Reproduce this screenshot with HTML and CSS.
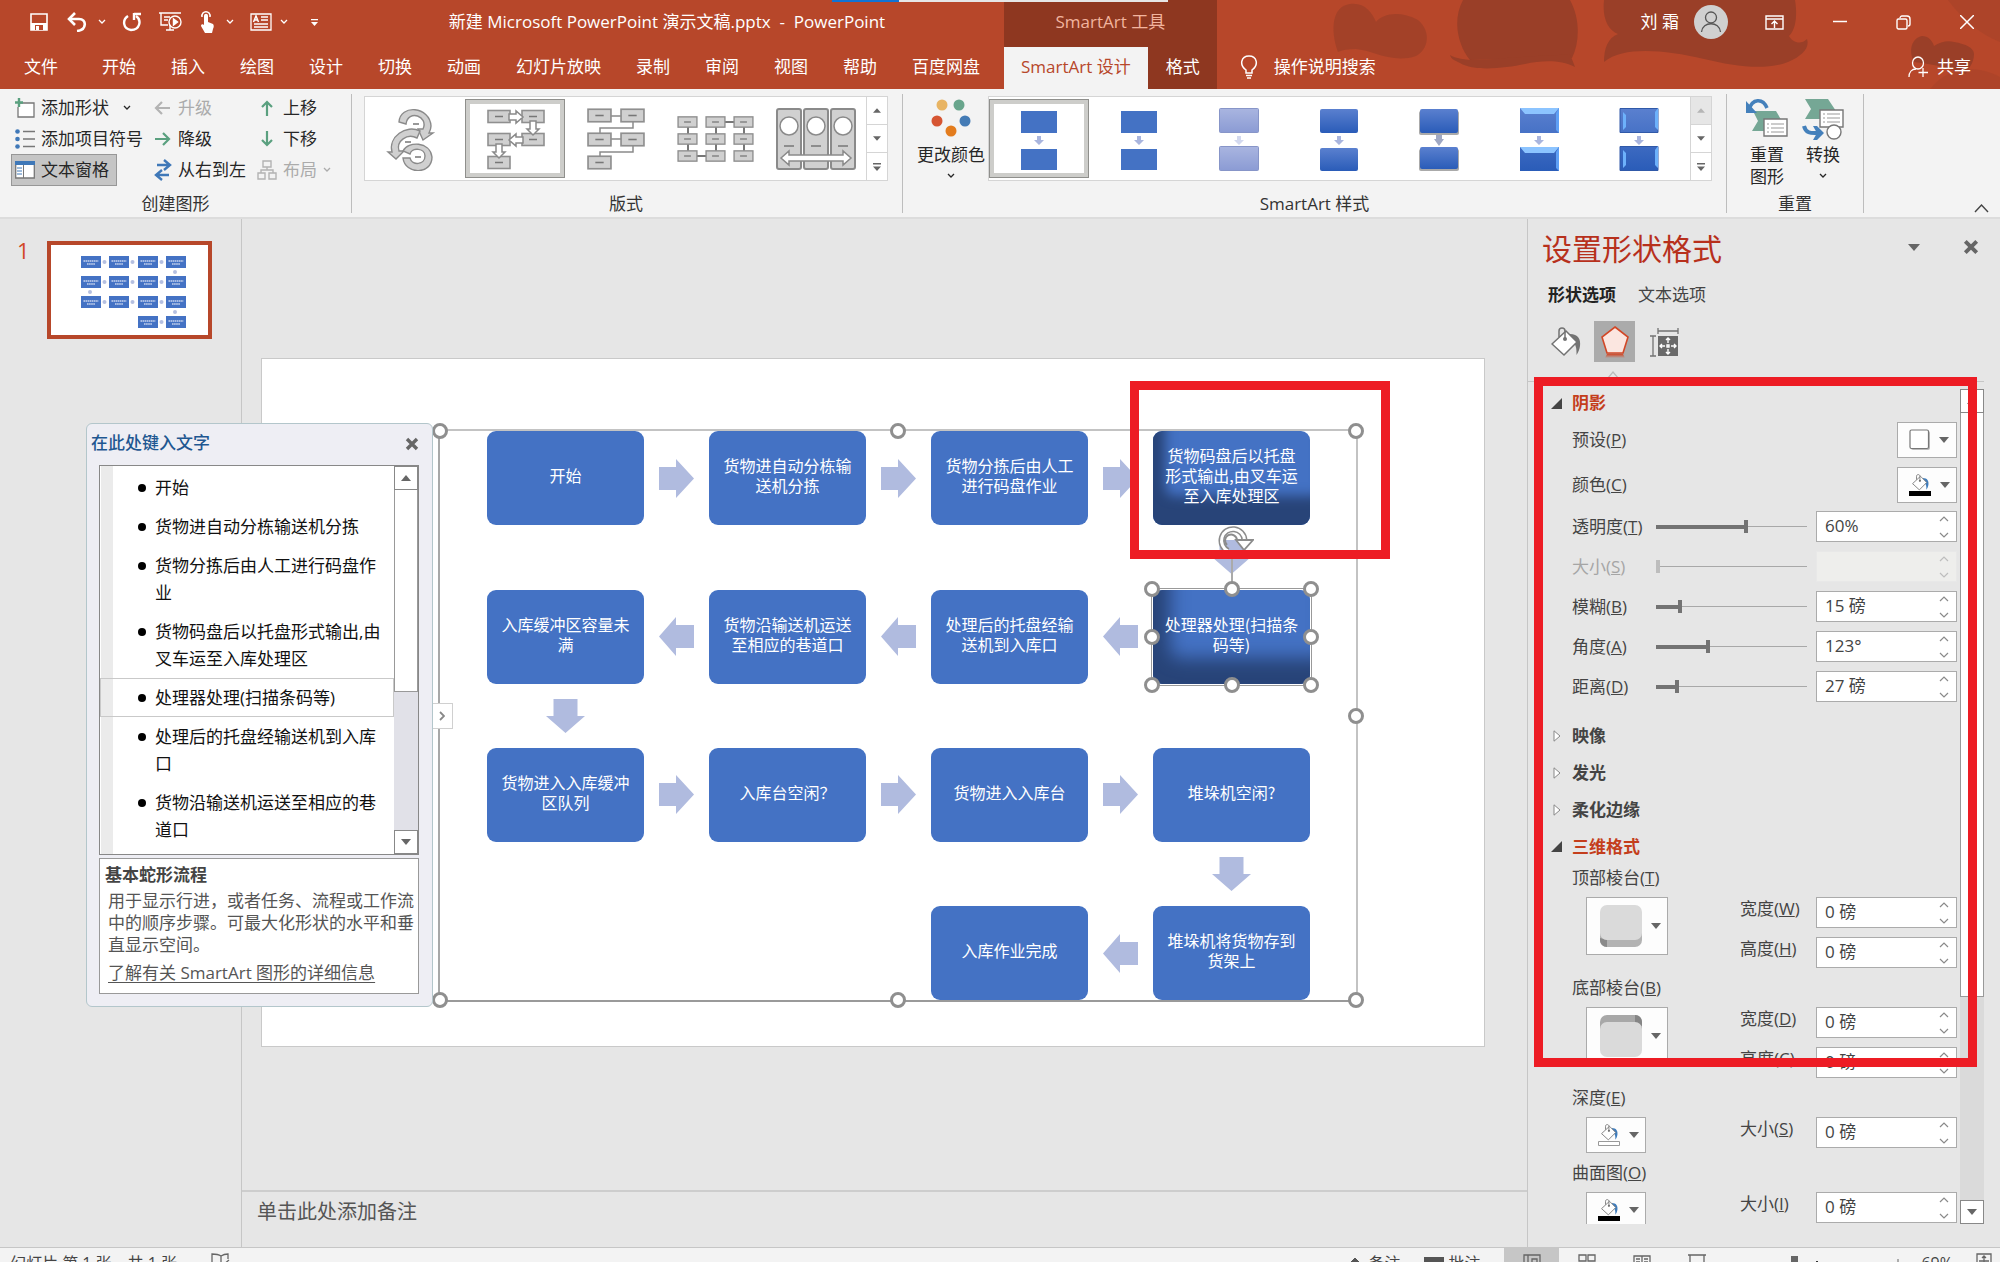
FILE: index.html
```html
<!DOCTYPE html>
<html lang="zh-CN">
<head>
<meta charset="utf-8">
<title>新建 Microsoft PowerPoint 演示文稿.pptx - PowerPoint</title>
<link rel="stylesheet" href="styles.css">
</head>
<body>
<svg class="defs" width="0" height="0" aria-hidden="true">
  <defs>
    <symbol id="chev" viewBox="0 0 8 6"><path d="M1 1l3 3 3-3" fill="none" stroke="currentColor" stroke-width="1.3"/></symbol>
    <symbol id="tri-down" viewBox="0 0 12 7"><path d="M0 0h12l-6 7z" fill="currentColor"/></symbol>
    <symbol id="tri-up" viewBox="0 0 12 7"><path d="M0 7h12l-6-7z" fill="currentColor"/></symbol>
    <symbol id="more" viewBox="0 0 8 8"><path d="M0 0h8v1.4H0zM0 3.5h8L4 8z" fill="currentColor"/></symbol>
    <symbol id="cross" viewBox="0 0 14 14"><path d="M2 2l10 10M12 2L2 12" stroke="currentColor" stroke-width="3.4"/></symbol>
    <symbol id="arr-right" viewBox="0 0 35 39"><path d="M0 8h17V0l18 19.5L17 39v-8H0z" fill="#b0bbdf"/></symbol>
    <symbol id="arr-left" viewBox="0 0 35 39"><path d="M35 8H17V0L0 19.5 17 39v-8h18z" fill="#b0bbdf"/></symbol>
    <symbol id="arr-down" viewBox="0 0 39 34"><path d="M7.5 0v17H0l19.5 17L39 17h-7.5V0z" fill="#b0bbdf"/></symbol>
    <symbol id="bucket" viewBox="0 0 30 30">
      <path d="M19 7c8 0 11 5 10 12-.4 3-1.5 6-3.5 9 0-7 0-12-8-17z" fill="var(--pour, #737373)"/>
      <path d="M1 17L15 4l11 11-13 13z" fill="#fff" stroke="#737373" stroke-width="1.5"/>
      <path d="M8 10V4c0-4 6-4 6 0v7" fill="none" stroke="#737373" stroke-width="1.5"/>
      <circle cx="14" cy="12" r="2" fill="#737373"/>
    </symbol>
    <symbol id="spin" viewBox="0 0 10 22"><path d="M1 5l4-4 4 4M1 17l4 4 4-4" fill="none" stroke="currentColor" stroke-width="1.2"/></symbol>
    <symbol id="gbox" viewBox="0 0 24 14"><rect x="1" y="1" width="22" height="12" fill="#d0d0d0" stroke="#8f8f8f" stroke-width="1.6"/><path d="M8 7h8" stroke="#777" stroke-width="1.5"/></symbol>
    <symbol id="mini" viewBox="0 0 20 12"><rect width="20" height="12" fill="#4472c4"/><path d="M2.5 5h15M6 8h8" stroke="#c9d5ee" stroke-width="1.3" stroke-dasharray="1.6 .5"/></symbol>
    <linearGradient id="g-soft" x2="0" y2="1"><stop stop-color="#a9b5e0"/><stop offset="1" stop-color="#8b9bd4"/></linearGradient>
    <linearGradient id="g-blue" x2="0" y2="1"><stop stop-color="#5a80cf"/><stop offset="1" stop-color="#2a5cb8"/></linearGradient>
    <linearGradient id="g-refl" x2="0" y2="1"><stop stop-color="#d24726"/><stop offset="1" stop-color="#d24726" stop-opacity="0"/></linearGradient>
  </defs>
</svg>

<header class="header">
  <svg class="decor" width="680" height="89" viewBox="0 0 680 89" aria-hidden="true">
    <g fill="#9a3f28">
      <path d="M18 52C10 30 12 6 30 4c14-2 22 8 26 18C62 14 80 10 98 20c14 12 10 30-2 36-24 8-44-6-60-7-8 0-14 1-18 3z" opacity=".7"/>
      <path d="M143 0C132 20 138 46 150 60l102-2c8-16 8-40-2-58z"/>
      <path d="M130 55c8 5 24 6 44 4 30-3 60-3 76-5l5 13c-16-8-34-6-50-3-20 4-50 8-65-1-6-3-9-4-10-8z"/>
      <path d="M284 0c-2 18 4 30 14 34-10 4-14 14-14 28 20-16 60-12 100-3 30 7 60 12 84 3 14-6 22-14 19-23-6 6-14 4-18-3 8-8 8-24 6-36z"/>
      <path d="M594 62c-6-12-2-24 8-26 6 0 10 4 12 10 6-4 14-6 20-4 12 2 20 6 20 12 0 10-6 14-8 20-14-4-30-10-52-12z"/>
      <path d="M628 0c10 14 30 34 52 42V0z" opacity=".35"/>
      <path d="M610 89c20-24 46-24 70-12v12z" opacity=".3"/>
    </g>
  </svg>
  <div class="loading" aria-hidden="true"><i class="loading-done"></i></div>

  <div class="title-left">
    <div class="qat">
      <button class="qbtn w22" aria-label="保存"><svg width="18" height="18" viewBox="0 0 18 18"><path d="M1 1h16v16H1z" fill="none" stroke="#fff" stroke-width="1.6"/><path d="M1 10h16v7H1z" fill="#fff"/><path d="M5 12h8v5H5z" fill="#b7472a"/><path d="M6 13h3v4H6z" fill="#fff"/></svg></button>
      <span class="qsplit g10"><button class="qbtn" aria-label="撤消"><svg width="22" height="20" viewBox="0 0 22 20"><path d="M3 7h10c8 0 8 11-2 12" fill="none" stroke="#fff" stroke-width="2.6"/><path d="M9 1L3 7l6 6" fill="none" stroke="#fff" stroke-width="2.6"/></svg></button><button class="qbtn" aria-label="撤消列表"><svg width="8" height="6"><use href="#chev"/></svg></button></span>
      <button class="qbtn" aria-label="重复"><svg width="20" height="20" viewBox="0 0 20 20"><path d="M6 4C0 8 1 17 9 18c9 0 11-10 5-14" fill="none" stroke="#fff" stroke-width="2.4"/><path d="M12 1v7M12 2h7" fill="none" stroke="#fff" stroke-width="2.4"/></svg></button>
      <button class="qbtn" aria-label="从头开始放映"><svg width="26" height="22" viewBox="0 0 26 22" fill="none" stroke="#fff" stroke-width="1.4"><path d="M1 2h22M3 2v12h7M8 19h8M12 14v5M6 6h6M6 9h4"/><circle cx="17" cy="11" r="6"/><path d="M15.5 8v6l4-3z" fill="#fff"/></svg></button>
      <span class="qsplit g12"><button class="qbtn" aria-label="触摸/鼠标模式"><svg width="14" height="22" viewBox="0 0 14 22"><path d="M4 10V5c0-3 4-3 4 0v6l5 2c1 1 1 3 0 5l-1 4H5l-4-7c0-2 2-2 3-1z" fill="#fff"/><path d="M2 6c-1-7 9-7 8 0" fill="none" stroke="#fff" stroke-width="1.5"/></svg></button><button class="qbtn" aria-label="模式选项"><svg width="8" height="6"><use href="#chev"/></svg></button></span>
      <span class="qsplit g8"><button class="qbtn" aria-label="文本框"><svg width="22" height="18" viewBox="0 0 22 18" fill="none" stroke="#fff" stroke-width="1.3"><path d="M1 1h20v16H1zM11 4h7M11 7h7M4 11h14M4 14h14"/><path d="M3.5 9l2.5-6 2.5 6M4.5 7h3" stroke-width="1.5"/></svg></button><button class="qbtn" aria-label="文本框选项"><svg width="8" height="6"><use href="#chev"/></svg></button></span>
      <button class="qbtn w20" aria-label="自定义快速访问工具栏"><svg width="7" height="7"><use href="#more"/></svg></button>
    </div>
    <h1 class="doc-title">新建 Microsoft PowerPoint 演示文稿.pptx&nbsp; -&nbsp; PowerPoint</h1>
  </div>
  <div class="context-label">SmartArt 工具</div>
  <div class="title-right">
    <span class="user">刘 霜</span>
    <svg class="avatar" width="34" height="34" viewBox="0 0 34 34"><circle cx="17" cy="17" r="17" fill="#d0d0d0"/><circle cx="17" cy="12.5" r="5.5" fill="none" stroke="#555" stroke-width="1.3"/><path d="M7.5 27c1-11 18-11 19 0" fill="none" stroke="#555" stroke-width="1.3"/></svg>
    <button class="wbtn" aria-label="功能区显示选项"><svg width="19" height="15" viewBox="0 0 19 15" fill="none" stroke="#fff" stroke-width="1.4"><path d="M1 1h17v13H1zM1 4h17M9.5 13V6M6.5 9l3-3 3 3"/></svg></button>
    <button class="wbtn" aria-label="最小化"><svg width="14" height="14" viewBox="0 0 14 14"><path d="M0 6.5h14" stroke="#fff" stroke-width="1.5"/></svg></button>
    <button class="wbtn" aria-label="还原"><svg width="15" height="15" viewBox="0 0 15 15" fill="none" stroke="#fff" stroke-width="1.4"><rect x="1" y="4" width="10" height="10" rx="1.5"/><path d="M4 3c0-1 1-2 2-2h5c2 0 3 1 3 3v5c0 1-1 2-2 2"/></svg></button>
    <button class="wbtn" aria-label="关闭"><svg width="14" height="14" viewBox="0 0 14 14"><path d="M0 0l14 14M14 0L0 14" stroke="#fff" stroke-width="1.5"/></svg></button>
  </div>

  <nav class="tabs">
    <a class="tab tab-file" href="#file">文件</a><a class="tab" href="#home">开始</a><a class="tab" href="#insert">插入</a><a class="tab" href="#draw">绘图</a><a class="tab" href="#design">设计</a><a class="tab" href="#transitions">切换</a><a class="tab" href="#animations">动画</a><a class="tab" href="#slideshow">幻灯片放映</a><a class="tab" href="#record">录制</a><a class="tab" href="#review">审阅</a><a class="tab" href="#view">视图</a><a class="tab" href="#help">帮助</a><a class="tab tab-last" href="#netdisk">百度网盘</a>
  </nav>
  <nav class="tabs tabs-context">
    <a class="tab tab-active" href="#smartart-design">SmartArt 设计</a><a class="tab" href="#smartart-format">格式</a>
  </nav>
  <div class="tabs-right">
    <button class="tellme"><svg width="18" height="24" viewBox="0 0 18 24" fill="none" stroke="#fff" stroke-width="1.5"><path d="M6 18v-3C-1 10 1 1 9 1s10 9 3 14v3zM6 20.5h6M7 23h4"/></svg>操作说明搜索</button>
    <button class="share"><svg width="21" height="22" viewBox="0 0 21 22" fill="none" stroke="#fff" stroke-width="1.3"><ellipse cx="10" cy="7" rx="5.5" ry="6"/><path d="M1 21c0-5 3-8 7-8M15 12v9M10.5 16.5h9.5"/></svg>共享</button>
  </div>
</header>

<section class="ribbon" aria-label="SmartArt 设计">
  <div class="group group-create">
    <div class="create-body">
      <div class="cmd-col">
        <button class="cmd"><svg width="20" height="20" viewBox="0 0 20 20"><path d="M4 5h15v14H3V9" fill="#fff" stroke="#777" stroke-width="1.3"/><path d="M4 0v9M0 4.5h8" stroke="#5aa07f" stroke-width="2.4"/></svg>添加形状<svg class="cmd-chev" width="8" height="6"><use href="#chev"/></svg></button>
        <button class="cmd"><svg width="20" height="20" viewBox="0 0 20 20"><g fill="#3f78b8"><circle cx="2.5" cy="2.5" r="2.3"/><circle cx="2.5" cy="10" r="2.3"/><circle cx="2.5" cy="17.5" r="2.3"/></g><path d="M8 2.5h12M8 10h12M8 17.5h12" stroke="#777" stroke-width="1.3"/></svg>添加项目符号</button>
        <button class="cmd cmd-on"><svg width="20" height="20" viewBox="0 0 20 20"><path d="M.7 2h18.6v16H.7z" fill="#fff" stroke="#777" stroke-width="1.3"/><path d="M0 1h20v4H0z" fill="#3f78b8"/><path d="M8.5 5v13" stroke="#777"/><path d="M2 8h5M2 11h5M2 14h5" stroke="#3f78b8"/></svg>文本窗格</button>
      </div>
      <div class="cmd-col">
        <button class="cmd" disabled><svg width="18" height="14" viewBox="0 0 18 14"><path d="M16 7H2M8 1L2 7l6 6" fill="none" stroke="#b3b3b3" stroke-width="2.2"/></svg>升级</button>
        <button class="cmd"><svg width="18" height="14" viewBox="0 0 18 14"><path d="M1 7h14M9 1l6 6-6 6" fill="none" stroke="#5aa07f" stroke-width="2.2"/></svg>降级</button>
        <button class="cmd"><svg width="18" height="22" viewBox="0 0 18 22"><path d="M3 6h12M10 1l6 5-6 5M15 16H3M8 11l-6 5 6 5" fill="none" stroke="#3f78b8" stroke-width="2.4"/></svg>从右到左</button>
      </div>
      <div class="cmd-col">
        <button class="cmd"><svg width="20" height="16" viewBox="0 0 20 16"><path d="M10 16V2M5 7l5-5 5 5" fill="none" stroke="#5aa07f" stroke-width="2.2"/></svg>上移</button>
        <button class="cmd"><svg width="20" height="16" viewBox="0 0 20 16"><path d="M10 0v14M5 9l5 5 5-5" fill="none" stroke="#5aa07f" stroke-width="2.2"/></svg>下移</button>
        <button class="cmd" disabled><svg width="20" height="20" viewBox="0 0 20 20" fill="none" stroke="#b3b3b3" stroke-width="1.4"><path d="M6 1h8v6H6zM1 13h7v6H1zM12 13h7v6h-7zM10 7v3M4 13v-3h12v3"/></svg>布局<svg class="cmd-chev-near" width="8" height="6"><use href="#chev"/></svg></button>
      </div>
    </div>
    <div class="group-label">创建图形</div>
  </div>

  <div class="group group-layouts">
    <div class="gallery">
      <div class="gallery-items">
        <button class="gitem" aria-label="环状蛇形流程"><svg width="84" height="64" viewBox="0 0 84 64"><g fill="#d0d0d0" stroke="#8a8a8a" stroke-width="1.4"><path d="M26 15C27-3 57-1 58 19c0 3-1 5-2 7h4l-10 7-5-11h5c6-13-15-20-17-5z"/><path d="M47 24c-14-7-32 6-28 21h-4l8 7 8-8h-5c-3-10 8-18 18-13z"/><path d="M30 44c5-10 27-10 29 6 0 18-27 18-29 1h7c2 8 15 7 15-2 0-8-13-9-15-2z"/></g><path d="M40 17h6M32 35h6M42 50h6" stroke="#777" stroke-width="1.5"/></svg></button>
        <button class="gitem gitem-on" aria-label="基本蛇形流程"><svg width="84" height="64" viewBox="0 0 84 64"><g><use href="#gbox" x="14" y="2" width="24" height="15"/><use href="#gbox" x="48" y="2" width="24" height="15"/><use href="#gbox" x="14" y="25" width="24" height="15"/><use href="#gbox" x="48" y="25" width="24" height="15"/><use href="#gbox" x="14" y="48" width="24" height="15"/></g><g fill="#fff" stroke="#8a8a8a" stroke-width="1.5"><path d="M36 7h7V4l7 6-7 6v-3h-7zM50 30h-7v-3l-7 6 7 6v-3h7zM57 14v8h-3l6 6 6-6h-3v-8zM23 37v8h-3l6 6 6-6h-3v-8z"/></g></svg></button>
        <button class="gitem" aria-label="重复蛇形流程"><svg width="84" height="64" viewBox="0 0 84 64"><path d="M36 9h16M60 14v7H27v6M36 32h16M60 38v7H27v6" fill="none" stroke="#8a8a8a" stroke-width="1.5"/><use href="#gbox" x="14" y="1" width="25" height="15"/><use href="#gbox" x="47" y="1" width="25" height="15"/><use href="#gbox" x="14" y="25" width="25" height="15"/><use href="#gbox" x="47" y="25" width="25" height="15"/><use href="#gbox" x="14" y="48" width="25" height="15"/></svg></button>
        <button class="gitem" aria-label="垂直蛇形流程"><svg width="84" height="64" viewBox="0 0 84 64"><path d="M15 10v39h28V15h28v34" fill="none" stroke="#777" stroke-width="2"/><use href="#gbox" x="4" y="9" width="21" height="12"/><use href="#gbox" x="4" y="26" width="21" height="12"/><use href="#gbox" x="4" y="43" width="21" height="12"/><use href="#gbox" x="32" y="9" width="21" height="12"/><use href="#gbox" x="32" y="26" width="21" height="12"/><use href="#gbox" x="32" y="43" width="21" height="12"/><use href="#gbox" x="60" y="9" width="21" height="12"/><use href="#gbox" x="60" y="26" width="21" height="12"/><use href="#gbox" x="60" y="43" width="21" height="12"/></svg></button>
        <button class="gitem" aria-label="连续图片列表"><svg width="84" height="64" viewBox="0 0 84 64"><g fill="#d0d0d0" stroke="#8a8a8a" stroke-width="2"><rect x="4" y="2" width="24" height="60" rx="2"/><rect x="31" y="2" width="24" height="60" rx="2"/><rect x="58" y="2" width="24" height="60" rx="2"/></g><g fill="#fff" stroke="#8a8a8a" stroke-width="1.5"><circle cx="16" cy="19" r="9"/><circle cx="43" cy="19" r="9"/><circle cx="70" cy="19" r="9"/><path d="M8 51l8-7v4h54v-4l8 7-8 7v-4H16v4z"/></g><path d="M11 39h10M38 39h10M65 39h10" stroke="#777" stroke-width="1.5"/></svg></button>
      </div>
      <div class="gscroll">
        <button aria-label="上一行"><svg width="8" height="5"><use href="#tri-up"/></svg></button>
        <button aria-label="下一行"><svg width="8" height="5"><use href="#tri-down"/></svg></button>
        <button aria-label="其他"><svg width="8" height="8"><use href="#more"/></svg></button>
      </div>
    </div>
    <div class="group-label">版式</div>
  </div>

  <div class="group group-styles">
    <div class="styles-body">
      <button class="big"><svg class="big-icon" width="40" height="42" viewBox="0 0 40 42"><circle cx="11" cy="7" r="5.5" fill="#e8b463"/><circle cx="28" cy="7" r="5.5" fill="#68a58c"/><circle cx="6" cy="23" r="5.5" fill="#d65532"/><circle cx="34" cy="23" r="5.5" fill="#447bb5"/><circle cx="20" cy="33" r="5.5" fill="#e37c1d"/></svg>更改颜色<svg class="big-chev" width="8" height="6"><use href="#chev"/></svg></button>
      <div class="gallery">
        <div class="gallery-items">
          <button class="gitem gitem-on" aria-label="简单填充"><svg width="84" height="64" viewBox="0 0 84 64"><path d="M24 4h36v22H24zM24 42h36v21H24z" fill="#4472c4"/><path d="M40 29h4v4h3l-5 5-5-5h3z" fill="#a9b5de"/></svg></button>
          <button class="gitem" aria-label="白色轮廓"><svg width="84" height="64" viewBox="0 0 84 64"><path d="M24 4h36v22H24zM24 42h36v21H24z" fill="#4472c4"/><path d="M40 29h4v4h3l-5 5-5-5h3z" fill="#a9b5de"/></svg></button>
          <button class="gitem" aria-label="细微效果"><svg width="84" height="64" viewBox="0 0 84 64"><g fill="url(#g-soft)" stroke="#8795c8"><rect x="22.5" y="1.5" width="39" height="24" rx="1"/><rect x="22.5" y="39.5" width="39" height="24" rx="1"/></g><path d="M40 29h4v4h3l-5 5-5-5h3z" fill="#d3d9ef"/></svg></button>
          <button class="gitem" aria-label="中等效果"><svg width="84" height="64" viewBox="0 0 84 64"><g fill="url(#g-blue)"><rect x="23" y="2" width="38" height="24" rx="2"/><rect x="23" y="41" width="38" height="23" rx="2"/></g><path d="M40 29h4v4h3l-5 5-5-5h3z" fill="#a9b5de"/></svg></button>
          <button class="gitem" aria-label="强烈效果"><svg width="84" height="64" viewBox="0 0 84 64"><g fill="#aaa"><rect x="22" y="4" width="40" height="24" rx="2"/><rect x="22" y="42" width="40" height="22" rx="2"/></g><g fill="url(#g-blue)"><rect x="23" y="2" width="38" height="24" rx="2"/><rect x="23" y="40" width="38" height="22" rx="2"/></g><path d="M39 28h6v4h2l-5 7-5-7h2z" fill="#9fa8c4"/></svg></button>
          <button class="gitem" aria-label="优雅"><svg width="84" height="64" viewBox="0 0 84 64"><g fill="url(#g-blue)"><path d="M23 1h39v25H23zM23 40h39v24H23z"/></g><path d="M23 1h39l-5 6H28zM23 40h39l-5 6H28z" fill="#8cc4ff"/><path d="M62 1v25l-3-3V6zM62 40v24l-3-3V45z" fill="#5fa0f5"/><path d="M40 29h4v4h3l-5 5-5-5h3z" fill="#a9b5de"/></svg></button>
          <button class="gitem" aria-label="嵌入"><svg width="84" height="64" viewBox="0 0 84 64"><g fill="url(#g-blue)" stroke="#3059a8"><path d="M23 1.5h38v24H23zM23 39.5h38v24H23z"/></g><path d="M26 5l3 3v12l-3 3zM61 1v22l-3-3V5zM26 43l3 3v12l-3 3zM61 39v22l-3-3V43z" fill="#6db1fb"/><path d="M40 29h4v4h3l-5 5-5-5h3z" fill="#a9b5de"/></svg></button>
        </div>
        <div class="gscroll">
          <button disabled aria-label="上一行"><svg width="8" height="5"><use href="#tri-up"/></svg></button>
          <button aria-label="下一行"><svg width="8" height="5"><use href="#tri-down"/></svg></button>
          <button aria-label="其他"><svg width="8" height="8"><use href="#more"/></svg></button>
        </div>
      </div>
    </div>
    <div class="group-label">SmartArt 样式</div>
  </div>

  <div class="group group-reset">
    <div class="reset-body">
      <button class="big"><svg class="big-icon" width="42" height="42" viewBox="0 0 42 42"><path d="M7 13h23l7 12-7 8H6l6-10z" fill="#75a795"/><path d="M18 21h23v17H18z" fill="#fff" stroke="#777" stroke-width="1.4"/><path d="M21 26h2M21 30h2M21 34h2M25 26h13M25 30h13M25 34h13" stroke="#999"/><path d="M3 12C6 0 17 0 21 10" fill="none" stroke="#4480bb" stroke-width="3.5"/><path d="M0 3v12h11z" fill="#4480bb"/></svg>重置<br>图形</button>
      <button class="big"><svg class="big-icon" width="42" height="42" viewBox="0 0 42 42"><path d="M3 1h23l8 12-7 8H3l6-10z" fill="#75a795"/><path d="M18 12h23v17H18z" fill="#fff" stroke="#777" stroke-width="1.4"/><path d="M21 16h2M21 20h2M21 24h2M25 16h13M25 20h13M25 24h13" stroke="#999"/><circle cx="32" cy="34" r="7" fill="#fff" stroke="#777" stroke-width="1.4"/><path d="M2 28c2 8 8 7 13 7" fill="none" stroke="#4480bb" stroke-width="4"/><path d="M11 28h4l7 7-7 7h-4l4-7z" fill="#4480bb"/></svg>转换<svg class="big-chev" width="8" height="6"><use href="#chev"/></svg></button>
    </div>
    <div class="group-label">重置</div>
  </div>
  <button class="collapse" aria-label="折叠功能区"><svg width="15" height="9" viewBox="0 0 15 9"><path d="M1 8l6.5-7L14 8" fill="none" stroke="#444" stroke-width="1.4"/></svg></button>
</section>

<main class="work">
  <aside class="thumbs">
    <span class="thumb-no">1</span>
    <button class="thumb" aria-label="幻灯片 1"><svg width="100%" viewBox="0 0 157 90">
      <g fill="#b5c0e1"><circle cx="53.5" cy="17" r="2"/><circle cx="81.5" cy="17" r="2"/><circle cx="110.500" cy="17" r="2"/><circle cx="124" cy="27" r="2"/><circle cx="53.5" cy="37" r="2"/><circle cx="81.5" cy="37" r="2"/><circle cx="110.500" cy="37" r="2"/><circle cx="39" cy="47" r="2"/><circle cx="53.5" cy="57" r="2"/><circle cx="81.5" cy="57" r="2"/><circle cx="110.500" cy="57" r="2"/><circle cx="124" cy="67" r="2"/><circle cx="110.500" cy="77" r="2"/></g>
      <use href="#mini" x="30" y="11" width="20" height="12"/><use href="#mini" x="58" y="11" width="20" height="12"/><use href="#mini" x="87" y="11" width="20" height="12"/><use href="#mini" x="115" y="11" width="20" height="12"/>
      <use href="#mini" x="30" y="31" width="20" height="12"/><use href="#mini" x="58" y="31" width="20" height="12"/><use href="#mini" x="87" y="31" width="20" height="12"/><use href="#mini" x="115" y="31" width="20" height="12"/>
      <use href="#mini" x="30" y="51" width="20" height="12"/><use href="#mini" x="58" y="51" width="20" height="12"/><use href="#mini" x="87" y="51" width="20" height="12"/><use href="#mini" x="115" y="51" width="20" height="12"/>
      <use href="#mini" x="87" y="71" width="20" height="12"/><use href="#mini" x="115" y="71" width="20" height="12"/>
    </svg></button>
  </aside>

  <section class="stage">
    <div class="canvas">
      <div class="slide">
        <div class="smartart">
          <div class="flow">
            <div class="node">开始</div><svg class="arrow" width="35" height="39"><use href="#arr-right"/></svg>
            <div class="node">货物进自动分栋输送机分拣</div><svg class="arrow" width="35" height="39"><use href="#arr-right"/></svg>
            <div class="node">货物分拣后由人工进行码盘作业</div><svg class="arrow" width="35" height="39"><use href="#arr-right"/></svg>
            <div class="node node-shade">货物码盘后以托盘形式输出,由叉车运至入库处理区</div>
            <svg class="arrow col-7" width="39" height="34"><use href="#arr-down"/></svg>
            <div class="node">入库缓冲区容量未满</div><svg class="arrow" width="35" height="39"><use href="#arr-left"/></svg>
            <div class="node">货物沿输送机运送至相应的巷道口</div><svg class="arrow" width="35" height="39"><use href="#arr-left"/></svg>
            <div class="node">处理后的托盘经输送机到入库口</div><svg class="arrow" width="35" height="39"><use href="#arr-left"/></svg>
            <div class="node node-shade-wide">处理器处理(扫描条码等)
              <div class="picked">
                <i class="stem"></i>
                <svg class="rotate" width="36" height="30" viewBox="0 0 36 30"><path d="M10 25A11.5 11.5 0 1 1 26.5 14" fill="none" stroke="#8c8c8c" stroke-width="6"/><path d="M10 25A11.5 11.5 0 1 1 26.5 14" fill="none" stroke="#fff" stroke-width="3"/><path d="M18 14h17l-9 10z" fill="#fff" stroke="#8c8c8c" stroke-width="1.8"/><path d="M9 19a6 6 0 1 1 10-5" fill="none" stroke="#8c8c8c" stroke-width="2"/></svg>
                <i class="knob tl"></i><i class="knob tc"></i><i class="knob tr"></i><i class="knob ml"></i><i class="knob mr"></i><i class="knob bl"></i><i class="knob bc"></i><i class="knob br"></i>
              </div>
            </div>
            <svg class="arrow col-1" width="39" height="34"><use href="#arr-down"/></svg>
            <div class="node col-1">货物进入入库缓冲区队列</div><svg class="arrow" width="35" height="39"><use href="#arr-right"/></svg>
            <div class="node">入库台空闲？</div><svg class="arrow" width="35" height="39"><use href="#arr-right"/></svg>
            <div class="node">货物进入入库台</div><svg class="arrow" width="35" height="39"><use href="#arr-right"/></svg>
            <div class="node">堆垛机空闲?</div>
            <svg class="arrow col-7" width="39" height="34"><use href="#arr-down"/></svg>
            <div class="node col-5">入库作业完成</div><svg class="arrow" width="35" height="39"><use href="#arr-left"/></svg>
            <div class="node">堆垛机将货物存到货架上</div>
          </div>
          <i class="knob tl"></i><i class="knob tc"></i><i class="knob tr"></i><i class="knob mr"></i><i class="knob bl"></i><i class="knob bc"></i><i class="knob br"></i>
          <button class="expander" aria-label="文本窗格"><svg width="6" height="10" viewBox="0 0 6 10"><path d="M1 1l4 4-4 4" fill="none" stroke="#888" stroke-width="1.8"/></svg></button>
        </div>
        <div class="mark mark-node"></div>
      </div>
    </div>
    <div class="notes">单击此处添加备注</div>
  </section>

  <aside class="format">
    <div class="format-head">
      <h2>设置形状格式</h2>
      <button aria-label="任务窗格选项"><svg width="12" height="7"><use href="#tri-down"/></svg></button>
      <button aria-label="关闭窗格"><svg width="16" height="16"><use href="#cross"/></svg></button>
    </div>
    <div class="format-tabs"><a class="on" href="#shape-options">形状选项</a><a href="#text-options">文本选项</a></div>
    <div class="format-icons">
      <button aria-label="填充与线条"><svg width="30" height="30"><use href="#bucket"/></svg></button>
      <button class="on" aria-label="效果"><svg width="30" height="34" viewBox="0 0 30 34"><path d="M15 2l13 10-5 16H7L2 12z" fill="#fbe6e0" stroke="#d24726" stroke-width="1.6"/><path d="M5 33l2-4h16l2 4z" fill="url(#g-refl)"/></svg></button>
      <button aria-label="大小与属性"><svg width="30" height="30" viewBox="0 0 30 30"><path d="M9 1v6M29 1v6M9 4h20M1 9h6M1 29h6M4 9v20" fill="none" stroke="#737373" stroke-width="1.3"/><path d="M9 9h20v20H9z" fill="#6a6a6a"/><path d="M19 11v5M19 22v5M11 19h5M22 19h5M17 13l2-2 2 2M17 25l2 2 2-2M13 17l-2 2 2 2M25 17l2 2-2 2M18 18h2v2h-2z" fill="none" stroke="#fff" stroke-width="1.4"/></svg></button>
    </div>
    <svg class="caret" width="12" height="7" viewBox="0 0 12 7"><path d="M1 7l5-6 5 6" fill="none" stroke="#bbb" stroke-width="1.2"/></svg>
    <div class="format-scroll">
      <div class="format-body">
        <h3 class="sec sec-open"><svg width="11" height="11" viewBox="0 0 11 11"><path d="M11 0v11H0z" fill="#444"/></svg>阴影</h3>
        <div class="row row-tall"><span class="lbl">预设(<u>P</u>)</span><button class="drop" aria-label="预设"><svg width="22" height="22" viewBox="0 0 22 22"><rect x="2" y="2" width="19" height="19" rx="2" fill="#bbb"/><rect x="1" y="1" width="18.5" height="18.5" rx="1.5" fill="#fff" stroke="#777" stroke-width="1.2"/></svg><svg width="10" height="6"><use href="#tri-down"/></svg></button></div>
        <div class="row row-tall"><span class="lbl">颜色(<u>C</u>)</span><button class="drop pour-blue" aria-label="颜色"><svg width="24" height="24" viewBox="0 0 24 24"><use href="#bucket" x="4" y="1" width="17" height="17"/><path d="M1 18h22v5H1z"/></svg><svg width="10" height="6"><use href="#tri-down"/></svg></button></div>
        <div class="row"><label class="lbl" for="tr">透明度(<u>T</u>)</label><input class="range" aria-label="透明度滑块" type="range" value="60" style="--v:60%"><span class="num"><input id="tr" value="60%"><svg width="10" height="22"><use href="#spin"/></svg></span></div>
        <div class="row row-off"><label class="lbl" for="sz">大小(<u>S</u>)</label><input class="range" aria-label="大小滑块" type="range" value="0" style="--v:0%" disabled><span class="num"><input id="sz" value="" disabled><svg width="10" height="22"><use href="#spin"/></svg></span></div>
        <div class="row"><label class="lbl" for="bl">模糊(<u>B</u>)</label><input class="range" aria-label="模糊滑块" type="range" value="15" style="--v:15%"><span class="num"><input id="bl" value="15 磅"><svg width="10" height="22"><use href="#spin"/></svg></span></div>
        <div class="row"><label class="lbl" for="an">角度(<u>A</u>)</label><input class="range" aria-label="角度滑块" type="range" value="34" style="--v:34%"><span class="num"><input id="an" value="123°"><svg width="10" height="22"><use href="#spin"/></svg></span></div>
        <div class="row"><label class="lbl" for="di">距离(<u>D</u>)</label><input class="range" aria-label="距离滑块" type="range" value="13" style="--v:13%"><span class="num"><input id="di" value="27 磅"><svg width="10" height="22"><use href="#spin"/></svg></span></div>
        <div class="secs">
          <h3 class="sec"><svg width="11" height="12" viewBox="0 0 11 12"><path d="M3 .8L9 6l-6 5.2z" fill="#fff" stroke="#888"/></svg>映像</h3>
          <h3 class="sec"><svg width="11" height="12" viewBox="0 0 11 12"><path d="M3 .8L9 6l-6 5.2z" fill="#fff" stroke="#888"/></svg>发光</h3>
          <h3 class="sec"><svg width="11" height="12" viewBox="0 0 11 12"><path d="M3 .8L9 6l-6 5.2z" fill="#fff" stroke="#888"/></svg>柔化边缘</h3>
          <h3 class="sec sec-open"><svg width="11" height="11" viewBox="0 0 11 11"><path d="M11 0v11H0z" fill="#444"/></svg>三维格式</h3>
        </div>
        <div class="sub">顶部棱台(<u>T</u>)</div>
        <div class="pair">
          <button class="drop drop-big" aria-label="顶部棱台"><svg width="44" height="44" viewBox="0 0 44 44"><rect x="1" y="8" width="42" height="35" rx="7" fill="#b3b3b3"/><path d="M1 34v2c0 4 3 7 7 7V36z" fill="#8a8a8a"/><rect x="1" y="1" width="42" height="35" rx="7" fill="#dadada"/></svg><svg width="10" height="6"><use href="#tri-down"/></svg></button>
          <div class="fields"><label for="tw">宽度(<u>W</u>)</label><span class="num"><input id="tw" value="0 磅"><svg width="10" height="22"><use href="#spin"/></svg></span><label for="th">高度(<u>H</u>)</label><span class="num"><input id="th" value="0 磅"><svg width="10" height="22"><use href="#spin"/></svg></span></div>
        </div>
        <div class="sub">底部棱台(<u>B</u>)</div>
        <div class="pair">
          <button class="drop drop-big" aria-label="底部棱台"><svg width="44" height="44" viewBox="0 0 44 44"><rect x="1" y="1" width="42" height="35" rx="7" fill="#a8a8a8"/><path d="M43 12V8c0-4-3-7-7-7v8z" fill="#858585"/><rect x="1" y="8" width="42" height="35" rx="7" fill="#dadada"/></svg><svg width="10" height="6"><use href="#tri-down"/></svg></button>
          <div class="fields"><label for="bw">宽度(<u>D</u>)</label><span class="num"><input id="bw" value="0 磅"><svg width="10" height="22"><use href="#spin"/></svg></span><label for="bh">高度(<u>C</u>)</label><span class="num"><input id="bh" value="0 磅"><svg width="10" height="22"><use href="#spin"/></svg></span></div>
        </div>
        <div class="sub">深度(<u>E</u>)</div>
        <div class="pair">
          <button class="drop pour-blue" aria-label="深度颜色"><svg width="24" height="24" viewBox="0 0 24 24"><use href="#bucket" x="4" y="1" width="17" height="17"/><path d="M1.5 18.5h21v4h-21z" fill="#fff" stroke="#999"/></svg><svg width="10" height="6"><use href="#tri-down"/></svg></button>
          <div class="fields"><label for="ds">大小(<u>S</u>)</label><span class="num"><input id="ds" value="0 磅"><svg width="10" height="22"><use href="#spin"/></svg></span></div>
        </div>
        <div class="sub">曲面图(<u>O</u>)</div>
        <div class="pair">
          <button class="drop pour-blue" aria-label="曲面图颜色"><svg width="24" height="24" viewBox="0 0 24 24"><use href="#bucket" x="4" y="1" width="17" height="17"/><path d="M1 18h22v5H1z"/></svg><svg width="10" height="6"><use href="#tri-down"/></svg></button>
          <div class="fields"><label for="cs">大小(<u>I</u>)</label><span class="num"><input id="cs" value="0 磅"><svg width="10" height="22"><use href="#spin"/></svg></span></div>
        </div>
      </div>
      <div class="sbar sbar-format"><button aria-label="向上滚动"><svg width="10" height="6"><use href="#tri-up"/></svg></button><i class="sthumb"></i><button class="sdown" aria-label="向下滚动"><svg width="10" height="6"><use href="#tri-down"/></svg></button></div>
    </div>
    <div class="mark mark-format"></div>
  </aside>

  <section class="textpane" aria-label="文本窗格">
    <div class="textpane-head"><h2>在此处键入文字</h2><button aria-label="关闭"><svg width="14" height="14"><use href="#cross"/></svg></button></div>
    <div class="outline">
      <ul>
        <li>开始</li>
        <li>货物进自动分栋输送机分拣</li>
        <li>货物分拣后由人工进行码盘作业</li>
        <li>货物码盘后以托盘形式输出,由叉车运至入库处理区</li>
        <li class="on">处理器处理(扫描条码等)</li>
        <li>处理后的托盘经输送机到入库口</li>
        <li>货物沿输送机运送至相应的巷道口</li>
      </ul>
      <div class="sbar sbar-text"><button aria-label="向上滚动"><svg width="10" height="6"><use href="#tri-up"/></svg></button><i class="sthumb"></i><button class="sdown" aria-label="向下滚动"><svg width="10" height="6"><use href="#tri-down"/></svg></button></div>
    </div>
    <div class="about">
      <h3>基本蛇形流程</h3>
      <p>用于显示行进，或者任务、流程或工作流中的顺序步骤。可最大化形状的水平和垂直显示空间。</p>
      <a href="#smartart-info">了解有关 SmartArt 图形的详细信息</a>
    </div>
  </section>
</main>

<footer class="status">
  <span>幻灯片 第 1 张，共 1 张</span>
  <svg class="status-book" width="20" height="20" viewBox="0 0 20 20" fill="none" stroke="#666" stroke-width="1.3"><path d="M10 3v14M10 3C7 1 4 1 1 1v14c3 0 6 0 9 2M10 3c3-2 5-2 7-2v5M12 12l6-5"/></svg>
  <button class="status-notes"><svg width="12" height="16" viewBox="0 0 12 16"><path d="M1 7l5-5 5 5zM0 10h12" fill="#555" stroke="#555"/></svg>备注</button>
  <button class="status-comments"><svg width="20" height="18" viewBox="0 0 20 18"><path d="M0 2h20v12H9l-4 4v-4H0z" fill="#555"/></svg>批注</button>
  <div class="views">
    <button class="on" aria-label="普通视图"><svg width="18" height="16" viewBox="0 0 18 16" fill="none" stroke="#666" stroke-width="1.3"><path d="M1 1h16v14H1zM5 1v14M9 5h5v5H9z"/></svg></button>
    <button aria-label="幻灯片浏览"><svg width="18" height="16" viewBox="0 0 18 16" fill="none" stroke="#666" stroke-width="1.3"><path d="M1 1h7v6H1zM10 1h7v6h-7zM1 10h7v5H1zM10 10h7v5h-7z"/></svg></button>
    <button aria-label="阅读视图"><svg width="18" height="16" viewBox="0 0 18 16" fill="none" stroke="#666" stroke-width="1.3"><path d="M9 2v13M9 2H1v12h8zM9 2h8v12H9M3 5h4M3 8h4M11 5h4M11 8h4"/></svg></button>
    <button aria-label="幻灯片放映"><svg width="18" height="16" viewBox="0 0 18 16" fill="none" stroke="#666" stroke-width="1.3"><path d="M0 1h18M2 1v9h14V1M9 10v5"/></svg></button>
  </div>
  <svg class="zoombar" width="170" height="20" viewBox="0 0 170 20"><path d="M0 12h10M24 12h120M155 12h10M160 6v12" stroke="#666"/><path d="M79 8v8" stroke="#333" stroke-width="2"/><path d="M53 3h7v16h-7z" fill="#666"/></svg>
  <span class="zoomval">69%</span>
  <svg width="16" height="16" viewBox="0 0 16 16" fill="none" stroke="#666" stroke-width="1.3"><path d="M1 1h14v14H1zM8 3v10M3 8h10M6 5l2-2 2 2"/></svg>
</footer>
</body>
</html>
```
FILE: styles.css
```css
* { box-sizing: border-box; }
body {
  margin: 0;
  height: 100vh;
  display: flex;
  flex-direction: column;
  overflow: hidden;
  font: 17px/24px "Open Sans", "Noto Sans CJK SC", sans-serif;
  color: #262626;
  background: #e6e6e6;
}
button {
  padding: 0;
  border: 0;
  background: none;
  font: inherit;
  color: inherit;
  display: inline-flex;
  align-items: center;
  justify-content: center;
}
a { color: inherit; text-decoration: none; }
h1, h2, h3, p, ul { margin: 0; padding: 0; font-size: inherit; font-weight: 400; }
svg { flex: none; display: block; }
.defs { position: absolute; }

/* Title bar and tabs */
.header {
  position: relative;
  display: grid;
  grid-template-columns: auto auto 1fr;
  grid-template-rows: 47px 42px;
  background: #b7472a;
  color: #fff;
  white-space: nowrap;
}
.header > * { position: relative; }
.header > .decor { position: absolute; right: 0; top: 0; }
.header > .loading { position: absolute; z-index: 1; left: 832px; top: 0; width: 336px; height: 2px; background: #e6e6e6; }
.loading-done { display: block; width: 67px; height: 2px; background: #1173d4; }
.title-left { display: flex; align-items: center; padding: 0 0 3px 28px; }
.qat { display: flex; align-items: center; gap: 16px; }
.qsplit { display: flex; align-items: center; }
.g8 { gap: 8px; }
.g10 { gap: 10px; }
.g12 { gap: 12px; }
.w20 { width: 20px; }
.w22 { width: 22px; }
.doc-title { flex: 1; padding-left: 6px; text-align: center; }
.context-label { background: #8e3720; color: #f2b49e; display: flex; align-items: center; justify-content: center; padding-bottom: 3px; }
.title-right { display: flex; align-items: center; justify-content: flex-end; padding: 0 26px 3px 0; }
.avatar { margin: 0 37px 0 15px; }
.wbtn + .wbtn { margin-left: 49px; }
.tabs { display: flex; }
.tab { display: flex; align-items: center; padding: 0 17px 3px 18px; }
.tab-file { padding: 0 26px 3px 24px; }
.tab-last { padding-right: 24px; }
.tabs-context { background: #8e3720; }
.tab-active { background: #f3f3f3; color: #b7472a; padding: 0 17px 3px; }
.tabs-right { display: flex; align-items: center; justify-content: space-between; padding: 0 29px 3px 23px; }
.tellme { gap: 16px; }
.share { gap: 8px; }

/* Ribbon */
.ribbon {
  display: flex;
  height: 130px;
  padding-top: 5px;
  background: #f3f3f3;
  border-bottom: 2px solid #dcdcdc;
}
.group { display: flex; flex-direction: column; height: 119px; border-right: 1px solid #bdbdbd; }
.group-label { margin-top: auto; line-height: 18px; text-align: center; color: #333; }
.create-body { display: flex; margin-top: -2px; padding: 0 20px 0 11px; }
.cmd-col { display: flex; flex-direction: column; align-items: flex-start; }
.cmd { height: 31px; gap: 6px; padding: 0 4px; white-space: nowrap; }
.cmd:disabled { color: #ababab; }
.cmd-on { background: #c5c5c5; border: 1px solid #979797; padding: 0 7px 0 3px; height: 32px; }
.cmd-chev { margin-left: 8px; }
.cmd-col + .cmd-col { margin-left: 3px; }
.group-create { width: 352px; }
.group-layouts { width: 551px; padding: 2px 14px 0 12px; }
.group-styles { width: 824px; padding: 2px 14px 0; }
.group-reset { width: 137px; }
.gallery { display: flex; height: 85px; flex: 1 1 auto; max-height: 85px; border: 1px solid #d5d5d5; background: #fff; }
.gallery-items { flex: 1; display: flex; align-items: center; }
.gitem { width: 100px; height: 79px; }
.gitem-on { border: 5px solid #cdcdca; outline: 1px solid #8f8f8c; outline-offset: -1px; background: #fff; }
.gscroll { width: 21px; display: flex; flex-direction: column; border-left: 1px solid #d5d5d5; color: #666; }
.gscroll button { flex: 1; }
.gscroll button + button { border-top: 1px solid #d5d5d5; }
.gscroll button:disabled { background: #e6e6e6; color: #b5b5b5; }
.styles-body { display: flex; gap: 3px; }
.big { flex-direction: column; line-height: 22px; white-space: nowrap; justify-content: flex-start; }
.big-icon { margin: 4px 0; }
.big-chev { margin-top: 7px; }
.styles-body .big-icon { margin-top: 2px; }
.reset-body { display: flex; justify-content: center; gap: 14px; }
.collapse { margin: auto 11px 4px auto; }

/* Work area */
.work { position: relative; flex: 1; min-height: 0; display: grid; grid-template-columns: 242px 1fr 473px; grid-template-rows: 100%; }
.thumbs { display: flex; align-items: flex-start; padding: 22px 29px 0 17px; border-right: 1px solid #c6c6c6; }
.thumb-no { width: 30px; font-size: 22px; line-height: 18px; color: #d24726; }
.thumb { flex: 1; border: 4px solid #b7472a; background: #fff; }
.stage { display: flex; flex-direction: column; min-width: 0; }
.canvas { flex: 1; display: flex; align-items: center; padding: 0 42px 4px 19px; }
.slide { position: relative; flex: 1; aspect-ratio: 16 / 9; background: #fff; border: 1px solid #c9c9c9; }
.notes { height: 57px; padding: 8px 15px; border-top: 2px solid #cdcdcd; font-size: 20px; color: #555; }
.smartart { position: absolute; left: 176px; top: 70px; width: 920px; height: 573px; border: 2px solid #c3c3c3; border-left-color: #a8a8a8; border-bottom-color: #9a9a9a; }
.flow {
  display: grid;
  grid-template-columns: repeat(3, 157px 65px) 157px;
  grid-template-rows: repeat(3, 94px 1fr) 94px;
  width: 823px;
  height: 569px;
  margin-left: 47px;
}
.node {
  position: relative;
  display: flex;
  align-items: center;
  justify-content: center;
  padding: 0 10px 6px;
  border-radius: 9px;
  background: #4472c4;
  color: #fff;
  font: 16px/20px "Noto Sans CJK SC", sans-serif;
  text-align: center;
}
.node-shade { box-shadow: inset 12px -29px 12px #284478; }
.node-shade-wide { box-shadow: inset 17px -26px 18px #284478; }
.arrow { align-self: center; justify-self: center; }
.col-1 { grid-column: 1; }
.col-5 { grid-column: 5; }
.col-7 { grid-column: 7; }
.knob { position: absolute; width: 16px; height: 16px; margin: -8px; border: 3px solid #8f8f8f; border-radius: 50%; background: #fff; }
.tl { left: 0; top: 0; }
.tc { left: 50%; top: 0; }
.tr { left: 100%; top: 0; }
.ml { left: 0; top: 50%; }
.mr { left: 100%; top: 50%; }
.bl { left: 0; top: 100%; }
.bc { left: 50%; top: 100%; }
.br { left: 100%; top: 100%; }
.picked { position: absolute; inset: -2px; border: 1px solid #999; }
.stem { position: absolute; left: 50%; top: -38px; width: 2px; height: 38px; margin-left: -1px; background: #aaa; }
.rotate { position: absolute; left: 50%; top: -63px; margin-left: -14px; }
.expander { position: absolute; left: -9px; top: 50%; width: 22px; height: 26px; margin-top: -13px; background: #fff; border: 1px solid #d0d0d0; }
.mark { position: absolute; border: 9px solid #ed1c24; pointer-events: none; }
.mark-node { left: 868px; top: 22px; width: 260px; height: 178px; }
.mark-format { left: 6px; top: 158px; width: 443px; height: 690px; }

/* Floating text pane */
.textpane { position: absolute; left: 86px; top: 204px; width: 347px; padding: 0 13px 12px 12px; border: 1px solid #b3c6cb; border-radius: 6px; background: #eeeef4; }
.textpane-head { display: flex; align-items: center; justify-content: space-between; height: 41px; margin-left: -8px; padding-bottom: 1px; color: #666; }
.textpane-head h2 { font-family: "Liberation Serif", "Noto Sans CJK SC", serif; font-weight: 500; color: #1f5791; }
.outline { display: flex; height: 390px; border: 1px solid #888; background: #fff; overflow: hidden; }
.outline ul { flex: 1; list-style: none; padding-top: 2px; background: linear-gradient(90deg, #fff 1px, #ebebeb 1px, #ebebeb 13px, #fff 13px); color: #111; }
.outline li { position: relative; padding: 5px 6px 5px 54px; line-height: 27px; border: 1px solid transparent; }
.outline li.on { border-color: #c9c9c9; }
.outline li::before { content: ""; position: absolute; left: 37px; top: 15px; width: 8px; height: 8px; border-radius: 50%; background: #000; }
.sbar { flex: none; width: 24px; display: flex; flex-direction: column; color: #666; }
.sbar button { height: 24px; border: 1px solid #888; background: #fff; }
.sthumb { background: #fff; border: 1px solid #999; border-top: 0; }
.sdown { margin-top: auto; }
.sbar-text { background: #e1e1e8; }
.sbar-text .sthumb { height: 202px; }
.about { height: 136px; margin-top: 3px; padding: 5px 0 0 8px; border: 1px solid #999; background: #fff; color: #555; line-height: 22px; }
.about h3 { margin: 0 0 4px -3px; font-weight: 700; color: #444; }
.about a { display: inline-block; margin-top: 6px; text-decoration: underline; text-underline-offset: 3px; }

/* Format pane */
.format { position: relative; display: flex; flex-direction: column; border-left: 1px solid #c6c6c6; color: #444; padding-bottom: 23px; }
.format-head { display: flex; align-items: center; height: 58px; padding: 2px 21px 0 14px; color: #666; }
.format-head h2 { flex: 1; font-size: 30px; line-height: 40px; color: #b7301c; }
.format-head button + button { margin-left: 43px; }
.format-head button { margin-bottom: 4px; }
.format-tabs { display: flex; gap: 22px; padding: 6px 20px 0; line-height: 24px; }
.format-tabs .on { font-weight: 700; color: #222; }
.format-icons { display: flex; gap: 8px; padding: 14px 17px 0; }
.format-icons button { width: 41px; height: 41px; }
.format-icons .on { background: #ababab; }
.caret { margin: 9px 0 3px 79px; }
.format-scroll { flex: 1; min-height: 0; display: flex; gap: 3px; margin-right: 16px; padding-top: 7px; border-top: 1px solid #c6c6c6; }
.format-body { flex: 1; overflow: hidden; padding-left: 23px; }
.sec { display: flex; align-items: center; gap: 10px; height: 37px; font-weight: 700; }
.format-body > .sec { height: 28px; margin-bottom: 4px; }
.sec-open { color: #c43e1c; }
.row { display: flex; align-items: center; height: 31px; margin: 0 0 9px 21px; }
.row-tall { height: 37px; margin-bottom: 8px; padding-top: 1px; justify-content: space-between; }
.lbl { flex: 0 0 84px; white-space: nowrap; }
.row-off { color: #a5a5a5; }
.range { -webkit-appearance: none; appearance: none; flex: 1; min-width: 0; height: 13px; margin: 0 9px 0 0; background: linear-gradient(#737373, #737373) 0 50% / var(--v) 4px no-repeat, linear-gradient(#a8a8a8, #a8a8a8) 0 50% / 100% 1px no-repeat; }
.range::-webkit-slider-thumb { -webkit-appearance: none; width: 4px; height: 13px; background: #737373; }
.range:disabled::-webkit-slider-thumb { background: #bdbdbd; }
.num { flex: none; width: 141px; height: 31px; display: flex; align-items: center; padding: 0 7px; border: 1px solid #ababab; background: #fff; color: #8a8a8a; }
.num input { flex: 1; min-width: 0; padding: 0 0 1px 1px; border: 0; outline: 0; background: none; font: inherit; color: #444; }
.row-off .num { background: #eeeeec; border-color: #e8e8e8; color: #bdbdbd; }
.drop { width: 60px; height: 36px; gap: 8px; padding-left: 3px; border: 1px solid #ababab; background: #fdfdfd; color: #666; }
.drop-big { width: 82px; height: 58px; padding-left: 5px; }
.pour-blue { --pour: #3f7dbd; }
.secs { padding-top: 6px; }
.sub { margin: 0 0 7px 21px; }
.secs + .sub { margin-top: 1px; }
.pair { display: flex; justify-content: space-between; align-items: flex-start; margin: 0 0 8px 35px; }
.fields { display: grid; grid-template-columns: 76px 141px; gap: 9px 0; }
.fields label { line-height: 23px; white-space: nowrap; }
.sbar-format { background: #dadada; }
.sbar-format .sthumb { height: 584px; }

/* Status bar, cut off by the bottom of the window */
.status { flex: none; display: flex; align-items: flex-start; height: 15px; padding: 3px 8px 0 10px; border-top: 1px solid #c6c6c6; background: #f3f3f3; font-size: 16px; color: #444; overflow: hidden; white-space: nowrap; }
.status svg { margin-top: 2px; }
.status-book { margin-left: 34px; }
.status-notes { margin-left: auto; gap: 7px; }
.status-comments { margin-left: 24px; gap: 4px; }
.views { display: flex; margin: -3px 0 0 24px; }
.views button { width: 55px; height: 30px; align-items: flex-start; padding-top: 4px; }
.views .on { background: #c6c6c6; }
.zoombar { margin-left: 14px; }
.zoomval { margin: 0 23px 0 13px; }
```
